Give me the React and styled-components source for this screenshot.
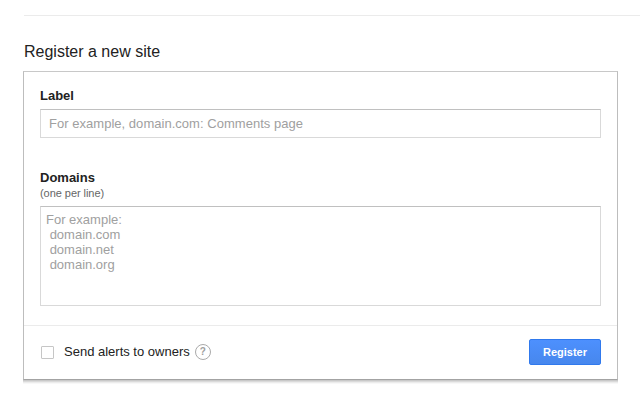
import React from 'react';
import styled, { createGlobalStyle } from 'styled-components';

const GlobalStyle = createGlobalStyle`
    body {
        margin: 0;
        background: #fff;
        color: #222;
        font-family: "Liberation Sans", Arial, sans-serif;
        font-size: 13px;
        overflow: hidden;
    }
`;

const Page = styled.div`
    box-sizing: border-box;
    height: 403px;
    padding: 15px 0 0 23px;
`;

const Rule = styled.hr`
    height: 1px;
    margin: 0 0 0 1px;
    border: 0;
    background: #ebebeb;
`;

const Title = styled.h1`
    margin: 26px 0 0 1px;
    font-size: 16px;
    font-weight: normal;
    line-height: 20px;
`;

const Panel = styled.form`
    box-sizing: border-box;
    width: 595px;
    height: 309px;
    margin-top: 9px;
    display: flex;
    flex-direction: column;
    border: 1px solid #bdbdbd;
    border-top-color: #c8c8c8;
    border-bottom-color: #a3a3a3;
    box-shadow:
        0 1px 0 #c9c9c9,
        0 2px 0 #dadada,
        0 3px 0 #ececec,
        0 4px 0 #f8f8f8;
`;

const Fields = styled.div`
    flex: 1;
    padding: 16px 16px 0;
`;

const Field = styled.div`
    display: flex;
    flex-direction: column;
    margin-bottom: ${ props => props.$gap || 0 }px;
`;

const Label = styled.label`
    font-weight: bold;
    line-height: 16px;
`;

const Hint = styled.span`
    color: #666;
    font-size: 11px;
    line-height: 15px;
    letter-spacing: -0.05px;
`;

const TextInput = styled.input`
    box-sizing: border-box;
    width: 561px;
    height: 29px;
    margin: 5px 0 0;
    padding: 1px 8px;
    border: 1px solid #d9d9d9;
    border-top-color: #c0c0c0;
    border-radius: 0;
    outline: none;
    font: 13px "Liberation Sans", Arial, sans-serif;
    letter-spacing: 0.03px;

    &::placeholder {
        color: #a0a0a0;
    }
`;

const TextArea = styled.textarea`
    box-sizing: border-box;
    width: 561px;
    height: 100px;
    margin: 5px 0 0;
    padding: 5px;
    border: 1px solid #d9d9d9;
    border-top-color: #c0c0c0;
    border-radius: 0;
    outline: none;
    resize: none;
    font: 13px/15px "Liberation Sans", Arial, sans-serif;

    &::placeholder {
        color: #a0a0a0;
    }
`;

const Footer = styled.div`
    box-sizing: border-box;
    height: 54px;
    display: flex;
    align-items: center;
    padding: 0 16px 2px 17px;
    border-top: 1px solid #ebebeb;
`;

const Checkbox = styled.input`
    box-sizing: border-box;
    width: 13px;
    height: 13px;
    margin: 1px 10px 0 0;
    appearance: none;
    border: 1px solid #c6c6c6;
    border-radius: 1px;
`;

const CheckboxLabel = styled.label`
    line-height: 16px;
`;

const Help = styled.span`
    box-sizing: border-box;
    width: 16px;
    height: 16px;
    margin-left: 5px;
    display: flex;
    align-items: center;
    justify-content: center;
    border: 1px solid #aaa;
    border-radius: 50%;
    color: #a0a0a0;
    font-size: 10px;
    font-weight: bold;
    line-height: 14px;
`;

const Button = styled.button`
    box-sizing: border-box;
    width: 72px;
    height: 26px;
    margin-left: auto;
    padding: 0;
    border: 1px solid #3079ed;
    border-radius: 2px;
    background: linear-gradient(#4d90fe, #4787ed);
    color: #fff;
    font: bold 11px "Liberation Sans", Arial, sans-serif;
`;

const App = () => (
    <Page>
        <GlobalStyle />
        <Rule />
        <Title>Register a new site</Title>
        <Panel onSubmit={ e => e.preventDefault() }>
            <Fields>
                <Field $gap={ 32 }>
                    <Label htmlFor="label">Label</Label>
                    <TextInput
                        id="label"
                        placeholder="For example, domain.com: Comments page"
                    />
                </Field>
                <Field>
                    <Label htmlFor="domains">Domains</Label>
                    <Hint>(one per line)</Hint>
                    <TextArea
                        id="domains"
                        placeholder={ 'For example:\n domain.com\n domain.net\n domain.org' }
                    />
                </Field>
            </Fields>
            <Footer>
                <Checkbox type="checkbox" id="alerts" />
                <CheckboxLabel htmlFor="alerts">Send alerts to owners</CheckboxLabel>
                <Help>?</Help>
                <Button type="submit">Register</Button>
            </Footer>
        </Panel>
    </Page>
);

export default App;
